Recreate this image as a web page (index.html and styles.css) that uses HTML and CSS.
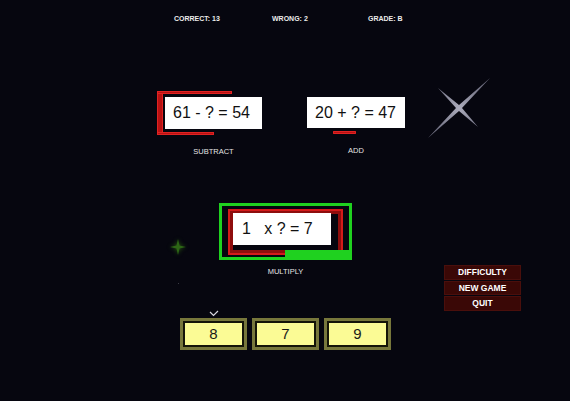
FILE: index.html
```html
<!DOCTYPE html>
<html lang="en">
<head>
    <meta charset="UTF-8">
    <meta name="viewport" content="width=device-width, initial-scale=1.0">
    <title>Math Drill</title>
    <link rel="stylesheet" href="styles.css">
</head>
<body>
    <div class="screen">
        <!-- score line -->
        <div class="hud">
            <span class="hud-correct">CORRECT: 13</span>
            <span class="hud-wrong">WRONG: 2</span>
            <span>GRADE: B</span>
        </div>

        <!-- queued problems -->
        <div class="top-row">
            <div class="op op-sub">
                <div class="frame frame-sub">
                    <span class="timer sub-left"></span>
                    <span class="timer sub-top"></span>
                    <span class="timer sub-bottom"></span>
                    <div class="eq">61 - ? = 54</div>
                </div>
                <div class="op-label">SUBTRACT</div>
            </div>

            <div class="op op-add">
                <div class="frame frame-add">
                    <span class="timer add-bottom"></span>
                    <div class="eq">20 + ? = 47</div>
                </div>
                <div class="op-label">ADD</div>
            </div>

            <svg class="burst" width="64" height="62" viewBox="0 0 64 62">
                <defs>
                    <radialGradient id="burstFill" cx="50%" cy="50%" r="50%">
                        <stop offset="0" stop-color="#acacbc"/>
                        <stop offset="1" stop-color="#6e6e80"/>
                    </radialGradient>
                </defs>
                <polygon fill="url(#burstFill)" points="63,1 35,31 51,50 32,34 1,61 29,31 11,11 32,28"/>
            </svg>
        </div>

        <!-- active problem -->
        <div class="mid-row">
            <div class="spark-col">
                <svg class="spark" width="16" height="16" viewBox="0 0 16 16">
                    <polygon fill="#2d6616" points="8,0 9.6,6.4 16,8 9.6,9.6 8,16 6.4,9.6 0,8 6.4,6.4"/>
                </svg>
                <span class="dot"></span>
            </div>

            <div class="op op-mul">
                <div class="mul-outer">
                    <div class="mul-frame">
                        <div class="eq">1&nbsp;&nbsp; x ? = 7</div>
                    </div>
                    <span class="mul-fill"></span>
                </div>
                <div class="op-label">MULTIPLY</div>
            </div>

            <div class="menu">
                <div class="menu-item">DIFFICULTY</div>
                <div class="menu-item">NEW GAME</div>
                <div class="menu-item">QUIT</div>
            </div>
        </div>

        <!-- answer choices -->
        <div class="answers">
            <div class="answer picked">
                <svg class="check" width="10" height="7" viewBox="0 0 10 7">
                    <polyline points="1,2 4.5,5.5 9,1" fill="none" stroke="#d8d8e0" stroke-width="1.2"/>
                </svg>
                8
            </div>
            <div class="answer">7</div>
            <div class="answer">9</div>
        </div>
    </div>
</body>
</html>
```

FILE: styles.css
```css
body {
    margin: 0;
    background-color: #06060f;
    font-family: 'Liberation Sans', Arial, sans-serif;
}
.screen {
    width: 570px;
    height: 401px;
    overflow: hidden;
    background-color: #06060f;
}

/* score line */
.hud {
    display: flex;
    height: 77px;
    padding: 14px 0 0 174px;
    box-sizing: border-box;
    font-size: 7px;
    font-weight: bold;
    line-height: 9px;
    color: #ececec;
}
.hud-correct {
    width: 98px;
}
.hud-wrong {
    width: 96px;
}

/* problem cards */
.top-row {
    display: flex;
    align-items: flex-start;
    height: 123px;
    padding-left: 157px;
}
.op {
    display: flex;
    flex-direction: column;
}
.op-sub {
    margin-top: 14px;
}
.op-add {
    margin-top: 14px;
    margin-left: 45px;
}
.frame {
    position: relative;
    padding: 6px 0 6px 0;
}
.frame-sub {
    padding-left: 8px;
}
.eq {
    position: relative;
    width: 97px;
    height: 32px;
    box-sizing: border-box;
    padding-left: 8px;
    background-color: #ffffff;
    color: #111;
    font-size: 16px;
    line-height: 32px;
    white-space: nowrap;
}
.op-add .eq {
    width: 98px;
    height: 31px;
    line-height: 31px;
}
.timer {
    position: absolute;
    background-color: #b81212;
    box-shadow: inset 0 0 0 1px #e02222;
}
.sub-left {
    left: 0;
    top: 0;
    width: 6px;
    height: 44px;
}
.sub-top {
    left: 0;
    top: 0;
    width: 75px;
    height: 3px;
}
.sub-bottom {
    left: 0;
    bottom: 0;
    width: 57px;
    height: 3px;
}
.add-bottom {
    left: 26px;
    bottom: 0;
    width: 23px;
    height: 3px;
    border-radius: 1px;
}
.op-label {
    margin-top: 12px;
    font-size: 7.5px;
    line-height: 9px;
    color: #e4e4e4;
    text-align: center;
}
.op-sub .op-label {
    padding-left: 8px;
}
.burst {
    margin-left: 22px;
}

/* active problem */
.mid-row {
    display: flex;
    align-items: flex-start;
    height: 118px;
    padding-left: 170px;
}
.spark-col {
    display: flex;
    flex-direction: column;
    align-items: center;
    margin-top: 39px;
    width: 16px;
}
.spark {
    filter: drop-shadow(0 0 2px #2a5a12);
}
.dot {
    width: 1px;
    height: 1px;
    margin-top: 28px;
    background-color: #3a3a44;
}
.op-mul {
    margin-top: 3px;
    margin-left: 33px;
}
.mul-outer {
    position: relative;
    width: 133px;
    height: 57px;
    box-sizing: border-box;
    padding: 3px 6px 2px 6px;
    border: 3px solid #1fd11f;
}
.mul-frame {
    position: relative;
    z-index: 1;
    height: 46px;
    box-sizing: border-box;
    padding: 2px 0 0 3px;
    border: 2px solid #d41a1a;
    box-shadow: inset 0 0 0 3px #8e0d0d;
}
.mul-frame .eq {
    width: 98px;
    height: 32px;
    padding-left: 9px;
    line-height: 32px;
}
.mul-fill {
    position: absolute;
    z-index: 2;
    right: 0;
    bottom: 0;
    width: 64px;
    height: 7px;
    background-color: #1fd11f;
}
.op-mul .op-label {
    margin-top: 7px;
}
.menu {
    display: flex;
    flex-direction: column;
    gap: 1px;
    margin-top: 65px;
    margin-left: 92px;
    width: 77px;
}
.menu-item {
    height: 14.5px;
    box-sizing: border-box;
    border: 1px solid #4a0f0c;
    background-color: #3a0806;
    color: #ffffff;
    font-size: 8.5px;
    font-weight: bold;
    line-height: 12.5px;
    text-align: center;
}

/* answer choices */
.answers {
    display: flex;
    gap: 5px;
    padding-left: 180px;
}
.answer {
    position: relative;
    width: 67px;
    height: 32px;
    box-sizing: border-box;
    border: 3px solid #77773b;
    box-shadow: inset 0 0 0 2px #141408;
    background-color: #fbfb95;
    color: #1a1a1a;
    font-size: 15px;
    line-height: 26px;
    text-align: center;
}
.check {
    position: absolute;
    left: 26px;
    top: -11px;
}
```
